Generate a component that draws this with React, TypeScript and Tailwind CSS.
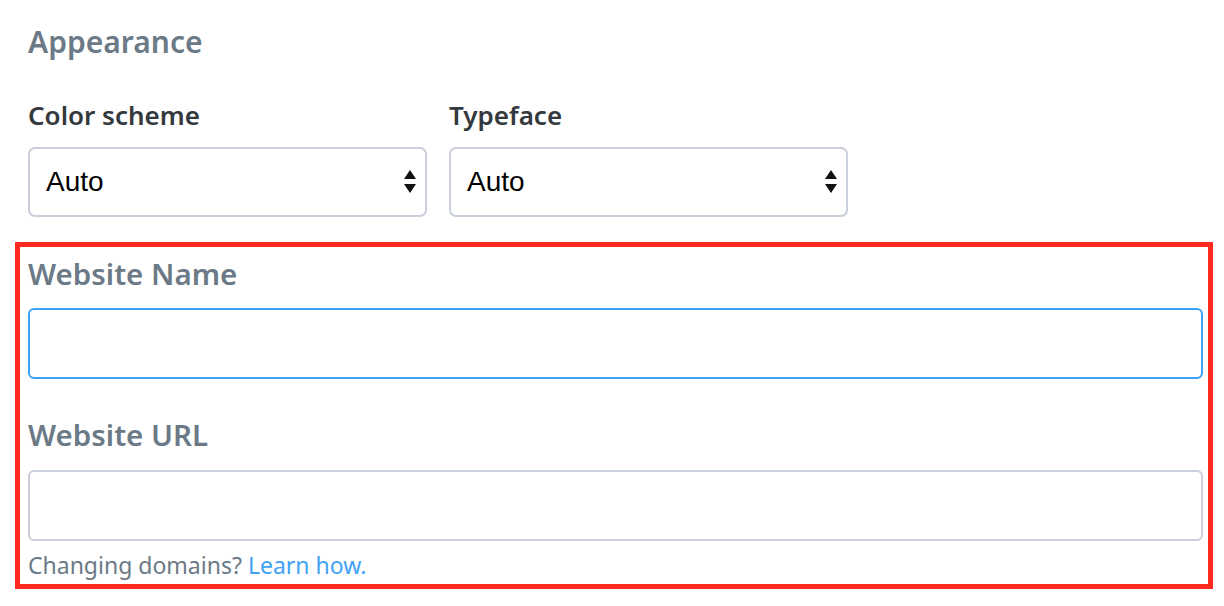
import React from 'react';

const sans = { fontFamily: '"Noto Sans", "Open Sans", sans-serif' };

const Arrows = () => (
  <svg width="14" height="26" viewBox="0 0 14 26" className="shrink-0">
    <path d="M7 1 L13 10 L1 10 Z" fill="#111" />
    <path d="M1 15 L13 15 L7 24 Z" fill="#111" />
  </svg>
);

const Select = ({ label }: { label: string }) => (
  <div className="flex flex-col w-[399px]">
    <label className="text-[26px] leading-[34px] font-semibold text-[#34393d]" style={sans}>
      {label}
    </label>
    <div className="mt-[15px] h-[70px] flex items-center justify-between rounded-[7px] border-2 border-[#c9cfdb] bg-white pl-[16px] pr-[8px]">
      <span className="text-[28px] text-black font-['Liberation_Sans',Arial,sans-serif]">Auto</span>
      <Arrows />
    </div>
  </div>
);

export default function App() {
  return (
    <div className="min-h-screen bg-white pt-[22px]" style={sans}>
      <h2 className="pl-[28px] text-[30px] leading-[40px] font-semibold text-[#6b7a86]">Appearance</h2>

      <div className="mt-[36px] flex gap-[22px] pl-[28px]">
        <Select label="Color scheme" />
        <Select label="Typeface" />
      </div>

      <div className="mt-[25px] ml-[15px] w-[1198px] h-[347px] border-[5px] border-[#ff2a1f] pl-[8px] pr-[5px] pt-[7px]">
        <div className="text-[29.5px] leading-[40px] font-semibold text-[#6b7a86]">Website Name</div>
        <div className="mt-[14px] h-[71px] rounded-[6px] border-2 border-[#3fa2f6] bg-white" />

        <div className="mt-[36px] text-[29.5px] leading-[40px] font-semibold text-[#6b7a86]">Website URL</div>
        <div className="mt-[15px] h-[71px] rounded-[6px] border-2 border-[#c9cfdb] bg-white" />

        <p className="mt-[9px] text-[23px] leading-[30px] text-[#6b7a86]">
          Changing domains? <a className="text-[#3fa2f6]">Learn how.</a>
        </p>
      </div>
    </div>
  );
}
